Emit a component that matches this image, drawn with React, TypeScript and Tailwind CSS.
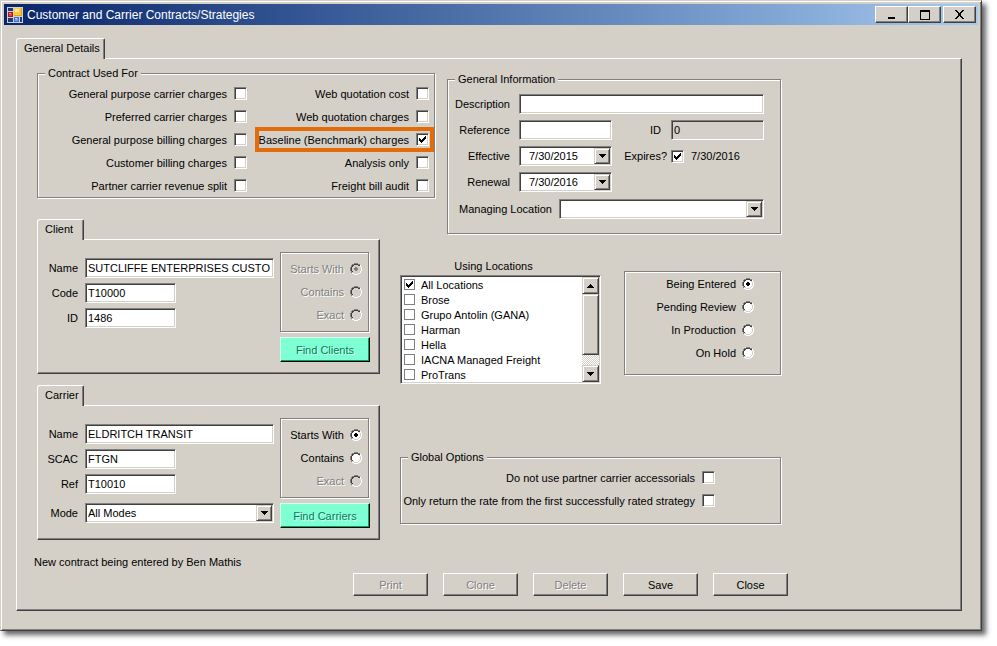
import type { ReactNode } from 'react';

const ETCHED = 'border border-[#808080] shadow-[inset_1px_1px_0_#fff,1px_1px_0_#fff]';
const SUNKEN =
  'border border-t-[#808080] border-l-[#808080] border-r-white border-b-white shadow-[inset_1px_1px_0_#404040,inset_-1px_-1px_0_#d4d0c8]';
const RAISED =
  'border border-t-white border-l-white border-r-[#404040] border-b-[#404040] shadow-[inset_-1px_-1px_0_#808080]';
const COMBO_BTN =
  'grid place-items-center bg-[#d4d0c8] border border-t-[#d4d0c8] border-l-[#d4d0c8] border-r-[#404040] border-b-[#404040] shadow-[inset_1px_1px_0_#fff,inset_-1px_-1px_0_#808080]';

function Arrow({ up = false }: { up?: boolean }) {
  return (
    <svg width="7" height="4" viewBox="0 0 7 4" shapeRendering="crispEdges" aria-hidden="true">
      <path d={up ? 'M3 0h1v1h1v1h1v1h1v1H0V3h1V2h1V1h1z' : 'M0 0h7v1H6v1H5v1H4v1H3V3H2V2H1V1H0z'} fill="#000" />
    </svg>
  );
}

function CheckBox({ id, checked = false, flat = false }: { id: string; checked?: boolean; flat?: boolean }) {
  return (
    <span className="grid shrink-0 place-items-center">
      <input
        id={id}
        type="checkbox"
        defaultChecked={checked}
        className={`peer col-start-1 row-start-1 appearance-none bg-white ${flat ? 'size-[11px] border border-[#808080]' : `size-[13px] ${SUNKEN}`}`}
      />
      <svg
        className="pointer-events-none col-start-1 row-start-1 hidden peer-checked:block"
        width="7"
        height="7"
        viewBox="0 0 7 7"
        shapeRendering="crispEdges"
        aria-hidden="true"
      >
        <path d="M6 0h1v3H6v1H5v1H4v1H3v1H2V6H1V5H0V2h1v1h1v1h1V3h1V2h1V1h1z" fill="#000" />
      </svg>
    </span>
  );
}

function CheckRow({ id, label, checked }: { id: string; label: string; checked?: boolean }) {
  return (
    <div className="flex h-[23px] items-center justify-end">
      <label
        htmlFor={id}
        className={`flex h-[17px] items-center gap-[7px] pr-px ${checked ? 'outline-4 outline-[#e36c0a]' : ''}`}
      >
        {label}
        <CheckBox id={id} checked={checked} />
      </label>
    </div>
  );
}

function Radio({
  id,
  name,
  label,
  checked = false,
  disabled = false,
}: {
  id: string;
  name: string;
  label: string;
  checked?: boolean;
  disabled?: boolean;
}) {
  return (
    <div className="flex h-[23px] items-center justify-end gap-[6px]">
      <label htmlFor={id} className={disabled ? 'text-[#808080] [text-shadow:1px_1px_0_#fff]' : ''}>
        {label}
      </label>
      <span className="grid shrink-0 place-items-center">
        <input
          id={id}
          type="radio"
          name={name}
          defaultChecked={checked}
          disabled={disabled}
          className={`peer col-start-1 row-start-1 size-3 appearance-none rounded-full ${disabled ? 'bg-[#d4d0c8]' : 'bg-white'}`}
        />
        <svg
          className="pointer-events-none col-start-1 row-start-1"
          width="12"
          height="12"
          viewBox="0 0 12 12"
          shapeRendering="crispEdges"
          aria-hidden="true"
        >
          <path d="M4 0h4v1H4zM2 1h2v1H2zM8 1h2v1H8zM1 2h1v2H1zM0 4h1v4H0zM1 8h1v2H1z" fill="#808080" />
          <path d="M4 1h4v1H4zM2 2h2v1H2zM8 2h2v1H8zM2 3h1v1H2zM1 4h1v4H1zM2 8h1v1H2z" fill="#404040" />
          <path d="M9 3h1v1H9zM10 4h1v4h-1zM9 8h1v1H9zM8 9h1v1H8zM4 10h4v1H4zM2 9h2v1H2z" fill="#d4d0c8" />
          <path d="M10 2h1v2h-1zM11 4h1v4h-1zM10 8h1v2h-1zM8 10h2v1H8zM4 11h4v1H4zM2 10h2v1H2z" fill="#fff" />
        </svg>
        <svg
          className="pointer-events-none col-start-1 row-start-1 hidden peer-checked:block"
          width="4"
          height="4"
          viewBox="0 0 4 4"
          shapeRendering="crispEdges"
          aria-hidden="true"
        >
          <path d="M1 0h2v1h1v2H3v1H1V3H0V1h1z" fill={disabled ? '#808080' : '#000'} />
        </svg>
      </span>
    </div>
  );
}

function TextBox({
  id,
  value = '',
  disabled = false,
  className = '',
}: {
  id: string;
  value?: string;
  disabled?: boolean;
  className?: string;
}) {
  return (
    <input
      id={id}
      type="text"
      defaultValue={value}
      readOnly={disabled}
      className={`h-5 min-w-0 px-0.5 ${disabled ? 'bg-[#d4d0c8]' : 'bg-white'} ${SUNKEN} ${className}`}
    />
  );
}

function Combo({ id, value, className = '' }: { id: string; value: string; className?: string }) {
  return (
    <span className={`grid h-5 ${className}`}>
      <select
        id={id}
        defaultValue={value}
        className={`col-start-1 row-start-1 w-full appearance-none bg-white px-0.5 ${SUNKEN}`}
      >
        <option value={value}>{value}</option>
      </select>
      <span
        className={`pointer-events-none col-start-1 row-start-1 my-0.5 mr-0.5 w-4 justify-self-end ${COMBO_BTN}`}
      >
        <Arrow />
      </span>
    </span>
  );
}

function DateBox({ id, value }: { id: string; value: string }) {
  return (
    <span className={`flex h-5 w-[93px] bg-white p-px ${SUNKEN}`}>
      <input id={id} type="text" defaultValue={value} className="w-0 grow bg-transparent pl-2" />
      <button type="button" aria-label="Open calendar" className={`w-4 ${COMBO_BTN}`}>
        <Arrow />
      </button>
    </span>
  );
}

function GroupBox({ title, className, children }: { title: string; className: string; children: ReactNode }) {
  return (
    <fieldset className={`min-w-0 ${ETCHED} ${className}`}>
      <legend className="ml-[7px] bg-[#d4d0c8] px-[3px]">{title}</legend>
      {children}
    </fieldset>
  );
}

function TabPanel({ title, className, children }: { title: string; className: string; children: ReactNode }) {
  return (
    <section className="flex flex-col items-start">
      <h2 className="relative -mb-px flex h-[21px] min-w-[47px] items-center rounded-tl-[3px] rounded-tr-[2px] border border-b-0 border-t-white border-l-white border-r-[#404040] bg-[#d4d0c8] pr-1 pb-0.5 pl-[7px] shadow-[inset_-1px_0_0_#808080]">
        {title}
      </h2>
      <div className={`w-full ${RAISED} ${className}`}>{children}</div>
    </section>
  );
}

function FindPanel({ name, disabled, action }: { name: string; disabled: boolean; action: string }) {
  return (
    <div className="flex w-[90px] flex-col gap-[5px]">
      <div className={`mr-px h-20 py-1 pr-[6px] ${ETCHED}`}>
        <Radio id={`${name}-starts`} name={name} label="Starts With" checked disabled={disabled} />
        <Radio id={`${name}-contains`} name={name} label="Contains" disabled={disabled} />
        <Radio id={`${name}-exact`} name={name} label="Exact" disabled />
      </div>
      <button
        type="button"
        className="h-[25px] border border-t-[#d4fff0] border-l-[#d4fff0] border-r-black border-b-black bg-[#7fffd4] text-[#008055] shadow-[inset_-1px_-1px_0_#00a06b] [text-shadow:1px_1px_0_#d4fff0]"
      >
        {action}
      </button>
    </div>
  );
}

function Field({ id, label, children }: { id: string; label: string; children: ReactNode }) {
  return (
    <>
      <label htmlFor={id} className="text-right">
        {label}
      </label>
      {children}
    </>
  );
}

const LEFT_FLAGS = [
  'General purpose carrier charges',
  'Preferred carrier charges',
  'General purpose billing charges',
  'Customer billing charges',
  'Partner carrier revenue split',
];
const RIGHT_FLAGS = [
  'Web quotation cost',
  'Web quotation charges',
  'Baseline (Benchmark) charges',
  'Analysis only',
  'Freight bill audit',
];
const LOCATIONS = ['All Locations', 'Brose', 'Grupo Antolin (GANA)', 'Harman', 'Hella', 'IACNA Managed Freight', 'ProTrans'];
const STATUSES = ['Being Entered', 'Pending Review', 'In Production', 'On Hold'];
const ACTIONS = [
  { label: 'Print', disabled: true },
  { label: 'Clone', disabled: true },
  { label: 'Delete', disabled: true },
  { label: 'Save', disabled: false },
  { label: 'Close', disabled: false },
];

function TitleBar() {
  const button = `grid h-[17px] w-[33px] place-items-center bg-[#d4d0c8] ${RAISED}`;
  return (
    <header className="flex h-[21px] items-center bg-linear-to-r from-[#0a246a] to-[#a6caf0] pr-0.5 pl-[3px] text-white">
      <svg width="16" height="16" viewBox="0 0 16 16" shapeRendering="crispEdges" aria-hidden="true">
        <path d="M0 0h16v16H0z" fill="#d4d0c8" />
        <path d="M1 1h5v3H1zM1 11h5v4H1zM13 10h2v5h-2z" fill="#1c3c82" />
        <path d="M7 1h8v8H7z" fill="#e8a010" />
        <path d="M7 1h7v7H7z" fill="#ffc83c" />
        <path d="M8 2h4v3H8z" fill="#ffe9a0" />
        <path d="M1 5h5v5H1z" fill="#a81810" />
        <path d="M2 6h3v3H2z" fill="#e04030" />
        <path d="M2 6h2v1H2z" fill="#ff9a88" />
        <path d="M7 10h5v5H7z" fill="#3a6fd8" />
        <path d="M8 11h3v3H8z" fill="#6ea4ff" />
        <path d="M8 11h2v1H8z" fill="#b8d4ff" />
      </svg>
      <h1 className="ml-1 grow text-[12px]">Customer and Carrier Contracts/Strategies</h1>
      <button type="button" aria-label="Minimize" className={button}>
        <svg width="11" height="9" viewBox="0 0 11 9" shapeRendering="crispEdges">
          <path d="M2 7h7v2H2z" fill="#000" />
        </svg>
      </button>
      <button type="button" aria-label="Maximize" className={button}>
        <svg width="10" height="10" viewBox="0 0 10 10" shapeRendering="crispEdges">
          <path fillRule="evenodd" d="M0 0h10v10H0zM1 2v7h8V2z" fill="#000" />
        </svg>
      </button>
      <button type="button" aria-label="Close window" className={`ml-0.5 ${button}`}>
        <svg width="9" height="9" viewBox="0 0 9 9" shapeRendering="crispEdges">
          <path
            d="M0 0h2v1h1v1h1v1h1V2h1V1h1V0h2v1H8v1H7v1H6v3h1v1h1v1h1v1H7V8H6V7H5V6H4v1H3v1H2v1H0V8h1V7h1V6h1V3H2V2H1V1H0z"
            fill="#000"
          />
        </svg>
      </button>
    </header>
  );
}

function GeneralInformation() {
  return (
    <GroupBox title="General Information" className="col-start-3 row-span-2 row-start-1 mt-[6px] h-[162px]">
      <div className="grid grid-cols-[62px_1fr] items-center gap-x-[9px] gap-y-[6px] pt-2 pr-4">
        <Field id="description" label="Description">
          <TextBox id="description" />
        </Field>
        <Field id="reference" label="Reference">
          <div className="flex items-center justify-between">
            <TextBox id="reference" className="w-[93px]" />
            <div className="flex items-center gap-[10px]">
              <label htmlFor="contract-id">ID</label>
              <TextBox id="contract-id" value="0" disabled className="w-[93px]" />
            </div>
          </div>
        </Field>
        <Field id="effective" label="Effective">
          <div className="flex items-center justify-between">
            <DateBox id="effective" value="7/30/2015" />
            <div className="flex items-center">
              <label htmlFor="expires" className="mr-1">
                Expires?
              </label>
              <CheckBox id="expires" checked />
              <span className="ml-[7px] w-[73px]">7/30/2016</span>
            </div>
          </div>
        </Field>
        <Field id="renewal" label="Renewal">
          <DateBox id="renewal" value="7/30/2016" />
        </Field>
      </div>
      <div className="mt-[7px] flex items-center gap-[7px] pr-4 pl-[11px]">
        <label htmlFor="managing">Managing Location</label>
        <Combo id="managing" value="" className="grow" />
      </div>
    </GroupBox>
  );
}

function UsingLocations() {
  return (
    <div className="w-[201px]">
      <h3 className="mb-0.5 pr-[14px] text-center">Using Locations</h3>
      <div className={`flex h-[109px] bg-white p-px ${SUNKEN}`}>
        <ul className="grow overflow-hidden pl-0.5">
          {LOCATIONS.map((name, i) => (
            <li key={name} className="flex h-[15px] items-center gap-[6px]">
              <CheckBox id={`location-${i}`} checked={i === 0} flat />
              <label htmlFor={`location-${i}`}>{name}</label>
            </li>
          ))}
        </ul>
        <div className="flex w-[17px] flex-col bg-[repeating-conic-gradient(#fff_0_25%,#d4d0c8_0_50%)] bg-size-[2px_2px]">
          <button type="button" aria-label="Scroll up" className={`h-[17px] ${COMBO_BTN}`}>
            <Arrow up />
          </button>
          <div className={`h-[61px] ${COMBO_BTN}`} />
          <button type="button" aria-label="Scroll down" className={`mt-auto h-[17px] ${COMBO_BTN}`}>
            <Arrow />
          </button>
        </div>
      </div>
    </div>
  );
}

export default function App() {
  return (
    <div className="bg-white pr-[15px] pb-[15px] font-['Liberation_Sans',Arial,sans-serif] text-[11px] leading-[14px] text-black">
      <main className="border border-t-[#d4d0c8] border-l-[#d4d0c8] border-r-[#404040] border-b-[#404040] bg-[#d4d0c8] p-[3px] shadow-[inset_1px_1px_0_#fff,inset_-1px_-1px_0_#808080,4px_4px_5px_rgba(0,0,0,0.6)]">
        <TitleBar />
        <div className="pt-[13px] pr-4 pb-4 pl-3">
          <TabPanel title="General Details" className="pt-[7px] pb-[14px] pl-4">
            <div className="ml-1 grid grid-cols-[363px_47px_334px] grid-rows-[142px_40px_auto]">
              <GroupBox title="Contract Used For" className="col-span-2 col-start-1 row-start-1 mr-3 h-[132px]">
                <div className="grid grid-cols-[210px_1fr] pt-0.5 pr-1">
                  <div>
                    {LEFT_FLAGS.map((label, i) => (
                      <CheckRow key={label} id={`left-flag-${i}`} label={label} />
                    ))}
                  </div>
                  <div>
                    {RIGHT_FLAGS.map((label, i) => (
                      <CheckRow key={label} id={`right-flag-${i}`} label={label} checked={i === 2} />
                    ))}
                  </div>
                </div>
              </GroupBox>

              <GeneralInformation />

              <div className="col-start-1 row-span-2 row-start-2 mt-[11px] mr-5 flex flex-col gap-[11px]">
                <TabPanel title="Client" className="flex h-[135px] justify-between pt-[12px] pr-[9px] pl-2">
                  <div className="grid grid-cols-[32px_189px] content-start items-center gap-x-[7px] gap-y-[5px] pt-[6px]">
                    <Field id="client-name" label="Name">
                      <TextBox id="client-name" value="SUTCLIFFE ENTERPRISES CUSTO" />
                    </Field>
                    <Field id="client-code" label="Code">
                      <TextBox id="client-code" value="T10000" className="w-[91px]" />
                    </Field>
                    <Field id="client-id" label="ID">
                      <TextBox id="client-id" value="1486" className="w-[91px]" />
                    </Field>
                  </div>
                  <FindPanel name="client-match" disabled action="Find Clients" />
                </TabPanel>
                <TabPanel title="Carrier" className="flex h-[135px] justify-between pt-[12px] pr-[9px] pl-2">
                  <div className="grid grid-cols-[32px_189px] content-start items-center gap-x-[7px] gap-y-[5px] pt-[6px]">
                    <Field id="carrier-name" label="Name">
                      <TextBox id="carrier-name" value="ELDRITCH TRANSIT" />
                    </Field>
                    <Field id="carrier-scac" label="SCAC">
                      <TextBox id="carrier-scac" value="FTGN" className="w-[91px]" />
                    </Field>
                    <Field id="carrier-ref" label="Ref">
                      <TextBox id="carrier-ref" value="T10010" className="w-[91px]" />
                    </Field>
                    <div className="col-span-2 mt-1 grid grid-cols-subgrid items-center">
                      <Field id="carrier-mode" label="Mode">
                        <Combo id="carrier-mode" value="All Modes" />
                      </Field>
                    </div>
                  </div>
                  <FindPanel name="carrier-match" disabled={false} action="Find Carriers" />
                </TabPanel>
              </div>

              <div className="col-span-2 col-start-2 row-start-3 flex flex-col justify-between pt-[11px] pb-4">
                <div className="flex items-start justify-between">
                  <UsingLocations />
                  <div className={`mt-3 h-[104px] w-[157px] pr-[26px] ${ETCHED}`}>
                    {STATUSES.map((label, i) => (
                      <Radio key={label} id={`status-${i}`} name="status" label={label} checked={i === 0} />
                    ))}
                  </div>
                </div>
                <GroupBox title="Global Options" className="h-[74px]">
                  <div className="pt-0.5 pr-16">
                    <CheckRow id="global-0" label="Do not use partner carrier accessorials" />
                    <CheckRow id="global-1" label="Only return the rate from the first successfully rated strategy" />
                  </div>
                </GroupBox>
              </div>
            </div>

            <p className="mt-[15px] ml-px">New contract being entered by Ben Mathis</p>
            <div className="mt-1 flex gap-[15px] pl-[320px]">
              {ACTIONS.map(({ label, disabled }) => (
                <button
                  key={label}
                  type="button"
                  disabled={disabled}
                  className={`h-[23px] w-[75px] ${RAISED} ${disabled ? 'text-[#808080] [text-shadow:1px_1px_0_#fff]' : ''}`}
                >
                  {label}
                </button>
              ))}
            </div>
          </TabPanel>
        </div>
      </main>
    </div>
  );
}
